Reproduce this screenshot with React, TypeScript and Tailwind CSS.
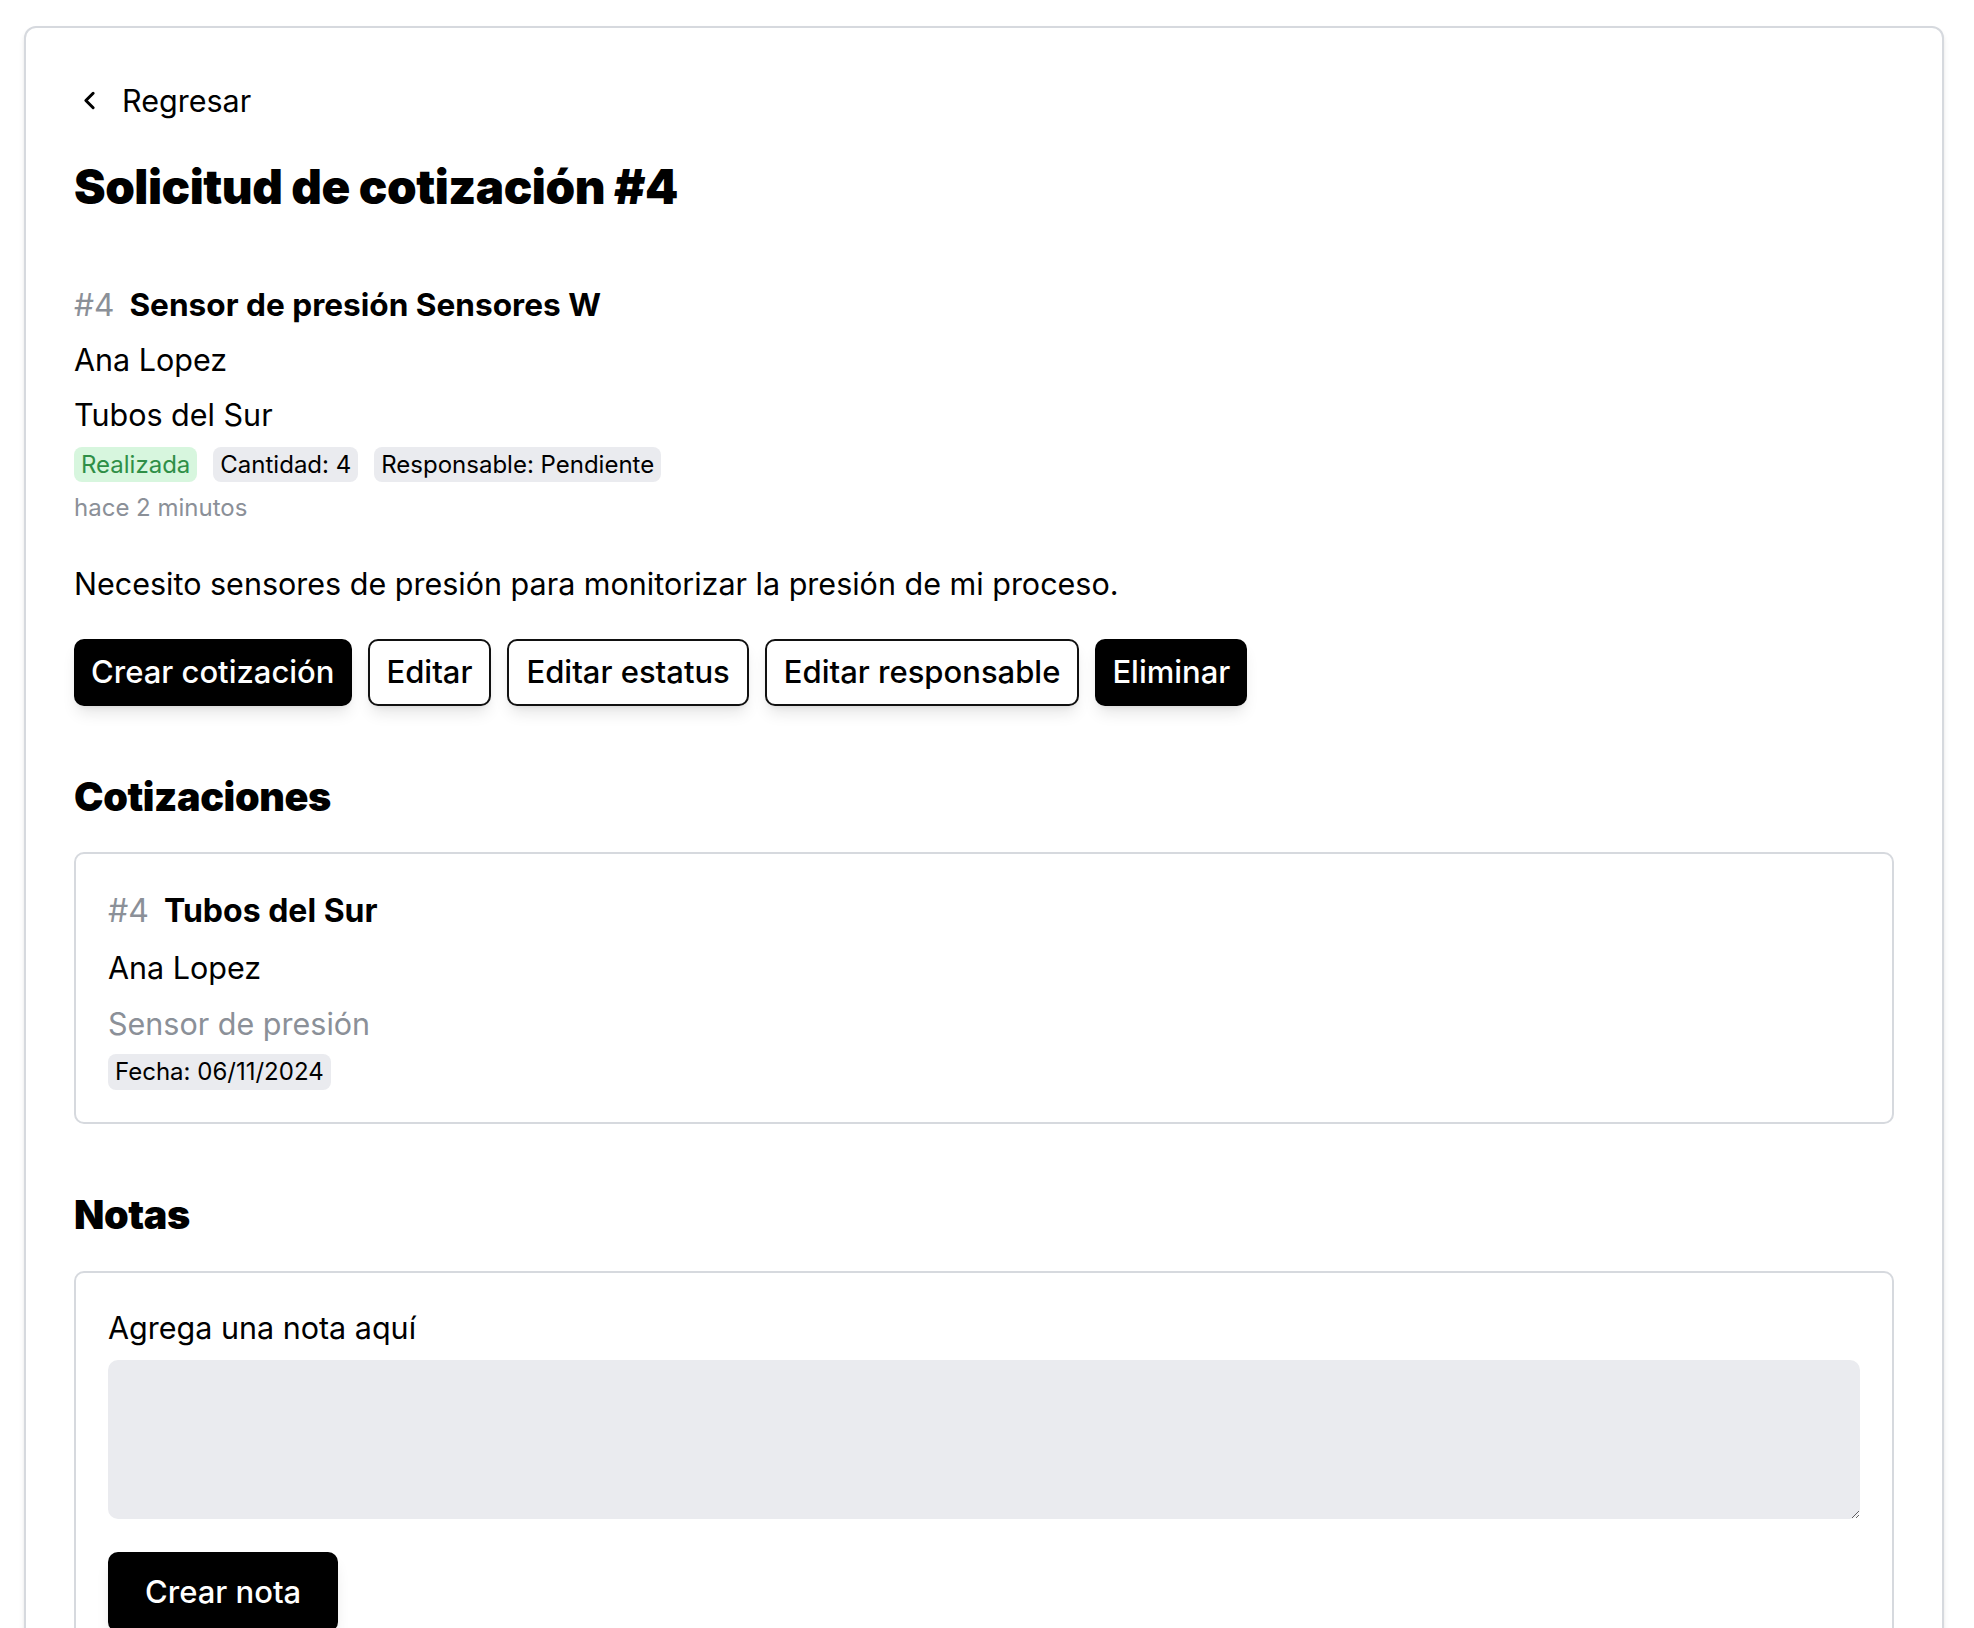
import { ChevronLeft } from "lucide-react";

const badges = [
  { label: "Realizada", className: "bg-[#d7f6de] text-[#2f8f47]" },
  { label: "Cantidad: 4", className: "bg-[#eaebef] text-black" },
  { label: "Responsable: Pendiente", className: "bg-[#eaebef] text-black" },
];

const actions = [
  { label: "Crear cotización", dark: true },
  { label: "Editar", dark: false },
  { label: "Editar estatus", dark: false },
  { label: "Editar responsable", dark: false },
  { label: "Eliminar", dark: true },
];

export default function App() {
  return (
    <div className="min-h-screen bg-white font-['Inter',sans-serif] text-black">
      <div className="ml-[24px] mt-[26px] w-[1920px] rounded-[12px] border-2 border-[#d6d9de] bg-white px-[48px] pt-[50px] pb-[48px] shadow-md">
        {/* back link */}
        <button className="flex h-[45px] items-center text-[30.5px] leading-[45px]">
          <ChevronLeft size={29} strokeWidth={2.5} className="ml-[1px]" />
          <span className="ml-[18px]">Regresar</span>
        </button>

        <h1 className="mt-[36px] text-[47.5px] font-black leading-[56px] tracking-[-0.01em]">
          Solicitud de cotización #4
        </h1>

        {/* request summary */}
        <div className="mt-[67px] flex flex-col">
          <div className="flex items-baseline gap-[15px] text-[31.6px] leading-[45px]">
            <span className="text-[#8b9098]">#4</span>
            <span className="font-bold">Sensor de presión Sensores W</span>
          </div>
          <p className="mt-[10px] text-[30.5px] leading-[45px]">Ana Lopez</p>
          <p className="mt-[10px] text-[30.5px] leading-[45px]">Tubos del Sur</p>
          <div className="mt-[10px] flex gap-[16px]">
            {badges.map((b) => (
              <span
                key={b.label}
                className={`h-[35px] rounded-[8px] px-[7px] text-[24px] leading-[35px] ${b.className}`}
              >
                {b.label}
              </span>
            ))}
          </div>
          <p className="mt-[9px] text-[24px] leading-[34px] text-[#8b9098]">hace 2 minutos</p>
        </div>

        <p className="mt-[38px] text-[30.5px] leading-[41px]">
          Necesito sensores de presión para monitorizar la presión de mi proceso.
        </p>

        <div className="mt-[35px] flex gap-[16px]">
          {actions.map((a) => (
            <button
              key={a.label}
              className={`h-[67px] rounded-[10px] px-[17px] text-[31px] font-medium shadow-lg ${
                a.dark ? "bg-black text-white" : "border-2 border-[#111] bg-white text-black"
              }`}
            >
              {a.label}
            </button>
          ))}
        </div>

        {/* quotes */}
        <h2 className="mt-[69px] text-[39.5px] font-black leading-[45px] tracking-[-0.01em]">Cotizaciones</h2>
        <div className="mt-[32px] rounded-[10px] border-2 border-[#d6d9de] px-[32px] pt-[34px] pb-[32px]">
          <div className="flex items-baseline gap-[15px] text-[32px] leading-[45px]">
            <span className="text-[#8b9098]">#4</span>
            <span className="font-bold">Tubos del Sur</span>
          </div>
          <p className="mt-[12px] text-[30.5px] leading-[45px]">Ana Lopez</p>
          <p className="mt-[11px] text-[30.5px] leading-[45px] text-[#8b9098]">Sensor de presión</p>
          <span className="mt-[8px] inline-block h-[36px] rounded-[8px] bg-[#eaebef] px-[7px] text-[24px] leading-[36px]">
            Fecha: 06/11/2024
          </span>
        </div>

        {/* notes */}
        <h2 className="mt-[69px] text-[39.5px] font-black leading-[45px] tracking-[-0.01em]">Notas</h2>
        <div className="mt-[33px] rounded-[10px] border-2 border-[#d6d9de] p-[32px]">
          <label className="block text-[30.5px] leading-[45px]">Agrega una nota aquí</label>
          <textarea className="mt-[10px] block h-[159px] w-full rounded-[10px] border-0 bg-[#eaebef] p-3 text-[22px] outline-none" />
          <button className="mt-[33px] h-[80px] rounded-[10px] bg-black px-[37px] text-[31px] font-medium text-white shadow-lg">
            Crear nota
          </button>
        </div>
      </div>
    </div>
  );
}
